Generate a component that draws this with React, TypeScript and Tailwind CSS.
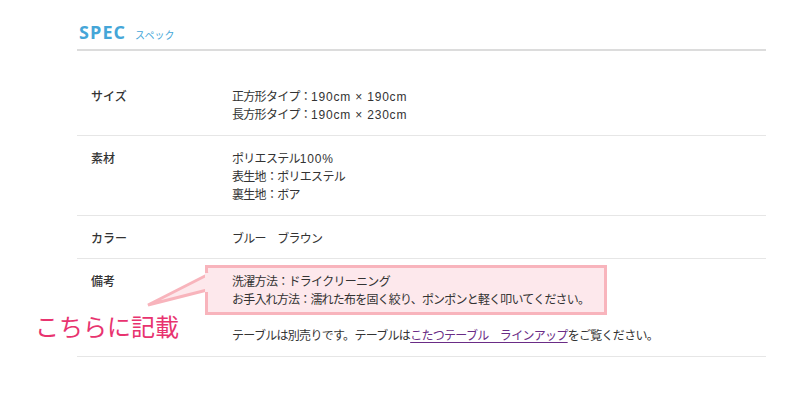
import React from 'react';

type Row = {
    label: string;
    values: string[];
    pb?: string;
};

const jp = { fontFamily: '"Liberation Sans", "Noto Sans CJK JP", sans-serif' };

const rows: Row[] = [
    { label: 'サイズ', values: ['正方形タイプ：190cm × 190cm', '長方形タイプ：190cm × 230cm'] },
    { label: '素材', values: ['ポリエステル100%', '表生地：ポリエステル', '裏生地：ボア'] },
    { label: 'カラー', values: ['ブルー　ブラウン'], pb: 'pb-[10px]' },
];

// CJK glyphs are set a little tight, latin runs get a bit of air
function Txt({ text }: { text: string }) {
    const parts = text.split(/([A-Za-z0-9%×][A-Za-z0-9%× ]*)/);
    return (
        <>
            {parts.map((p, i) =>
                /^[A-Za-z0-9%×]/.test(p) ? (
                    <span key={i} className="tracking-[0.8px]">{p}</span>
                ) : (
                    <span key={i}>{p}</span>
                ),
            )}
        </>
    );
}

function SpecRow({ label, pb = 'pb-[11px]', children }: { label: string; pb?: string; children: React.ReactNode }) {
    return (
        <div className={`flex border-b border-[#e6e6e6] pt-[14px] ${pb}`}>
            <div className="w-[155px] shrink-0 pl-[14px] font-medium tracking-normal text-[#333]">{label}</div>
            <div className="flex-1 text-[#333]">{children}</div>
        </div>
    );
}

export default function App() {
    return (
        <div className="relative w-[800px] h-[412px] bg-white overflow-hidden text-[12px] leading-[18px] tracking-[-0.7px]" style={jp}>
            <div className="ml-[77px] w-[689px] pt-[21px]">
                <div className="flex items-baseline gap-[9px] pl-[2px] pb-[4px] border-b-2 border-[#dcdcdc] tracking-normal">
                    <span
                        className="text-[18px] leading-[22px] font-bold tracking-[0.06em] text-[#45a6d8]"
                        style={{ fontFamily: '"Open Sans", sans-serif' }}
                    >
                        SPEC
                    </span>
                    <span className="text-[10px] text-[#45a6d8]">スペック</span>
                </div>

                <div className="mt-[23px]">
                    {rows.map((row) => (
                        <SpecRow key={row.label} label={row.label} pb={row.pb}>
                            {row.values.map((v, i) => (
                                <div key={i}><Txt text={v} /></div>
                            ))}
                        </SpecRow>
                    ))}
                    <SpecRow label="備考">
                        <div className="relative">
                            <div className="absolute left-[-27px] top-[-8px] w-[402px] h-[50px] border-[3px] border-[#f8b4bc] bg-[#fde8ec]" />
                            <div className="relative">
                                <div>洗濯方法：ドライクリーニング</div>
                                <div className="tracking-[-0.8px]">お手入れ方法：濡れた布を固く絞り、ポンポンと軽く叩いてください。</div>
                            </div>
                            <div className="mt-[18px]">
                                テーブルは別売りです。テーブルは
                                <span className="text-[#6a2c86] underline underline-offset-2">こたつテーブル　ラインアップ</span>
                                をご覧ください。
                            </div>
                        </div>
                    </SpecRow>
                </div>
            </div>

            {/* callout pointer */}
            <svg className="absolute left-0 top-0" width="800" height="412" viewBox="0 0 800 412">
                <polygon points="207,275 148,305 207,290" fill="#fde8ec" stroke="#f8b4bc" strokeWidth="3" strokeLinejoin="miter" />
                <rect x="205" y="273" width="5" height="19" fill="#fde8ec" />
            </svg>

            <div className="absolute left-[35px] top-[312px] text-[24px] leading-[28px] tracking-normal text-[#e8336f]" style={{ fontFamily: '"Noto Sans CJK JP", sans-serif' }}>
                こちらに記載
            </div>
        </div>
    );
}
